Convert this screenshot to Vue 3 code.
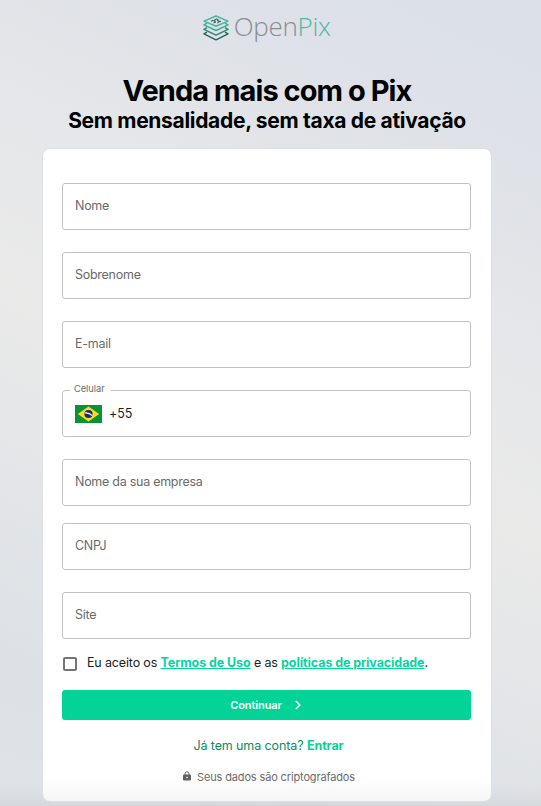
<script setup>
const fields = [
  { id: 'nome', label: 'Nome' },
  { id: 'sobrenome', label: 'Sobrenome' },
  { id: 'email', label: 'E-mail' },
  { id: 'celular', label: 'Celular', phone: true },
  { id: 'empresa', label: 'Nome da sua empresa', tight: true },
  { id: 'cnpj', label: 'CNPJ' },
  { id: 'site', label: 'Site' },
]
</script>

<template>
  <main class="page">
    <div class="logo">
      <svg class="mark" viewBox="0 0 26 26" fill="none" stroke-width="1.500" stroke-linejoin="round">
        <path d="M4 17.200 1 18.900l12 5.900 12-5.900-3-1.700" stroke="#22695a" />
        <path d="M4 12.700 1 14.400l12 5.700 12-5.700-3-1.700" stroke="#2b8570" />
        <path d="M4 8.200 1 9.900l12 5.600 12-5.600-3-1.700" stroke="#3fae97" />
        <path d="M13 1 25 6.100 13 11.300 1 6.100Z" stroke="#49b7a0" />
        <path d="M8 6.300l2.200-1M10.500 8l2-1-1.500-1.500 2.500-1.600 1.500 1M14.500 8.200l1-1.300 2.500-.7M14 5.800l2.300-.9" stroke="#315f55" stroke-width="1.100" />
      </svg>
      <span class="wordmark">Open<span class="pix">Pix</span></span>
    </div>
    <h1>Venda mais com o Pix</h1>
    <h2>Sem mensalidade, sem taxa de ativação</h2>

    <form class="card" @submit.prevent>
      <div v-for="f in fields" :key="f.id" class="field" :class="{ tight: f.tight, phone: f.phone }">
        <template v-if="f.phone">
          <span class="float-label">{{ f.label }}</span>
          <svg class="flag" viewBox="0 0 27 18">
            <path d="M0 0h27v18H0z" fill="#079438" />
            <path d="M13.500 1.600 24.200 9l-10.700 7.400L2.800 9z" fill="#ffd91c" />
            <circle cx="13.500" cy="9" r="4.100" fill="#142c7c" />
            <path d="M9.800 7.900q4.300-.5 7.500 2.700" stroke="#fff" stroke-width="1.100" fill="none" />
          </svg>
          <span class="code">+55</span>
        </template>
        <span v-else>{{ f.label }}</span>
      </div>

      <div class="terms">
        <span class="checkbox"></span>
        <span class="terms-text">Eu aceito os <a>Termos de Uso</a> e as <a>políticas de privacidade</a>.</span>
      </div>

      <button class="submit">
        <span>Continuar</span>
        <svg viewBox="0 0 8 10"><path d="M1.800 1l4 4-4 4" fill="none" stroke="#fff" stroke-width="1.600" /></svg>
      </button>

      <p class="login">Já tem uma conta? <b>Entrar</b></p>
      <p class="secure">
        <svg viewBox="0 0 8 10">
          <path d="M2 4V2.800a2 2 0 0 1 4 0V4" fill="none" stroke="#616161" stroke-width="1" />
          <rect y="3.500" width="8" height="6" rx="1" fill="#616161" />
          <circle cx="4" cy="6.500" r=".8" fill="#fff" />
        </svg>
        <span>Seus dados são criptografados</span>
      </p>
    </form>
  </main>
</template>

<style>
body {
  margin: 0;
}
</style>

<style scoped>
.page {
  box-sizing: border-box;
  height: 806px;
  padding: 13px 49px 0 42px;
  overflow: hidden;
  display: flex;
  flex-direction: column;
  align-items: center;
  font-family: Inter, "Liberation Sans", sans-serif;
  background:
    linear-gradient(to top, rgba(80, 80, 90, 0.07), transparent 22px),
    linear-gradient(205deg, #dbe0e9 0%, #dfe2e7 18%, #e4e6e9 30%, #eaeae9 50%, #e4e6e8 66%, #dde1e6 86%, #dfe2e7 100%);
}
.logo {
  display: flex;
  align-items: center;
  gap: 4.5px;
  height: 28px;
}
.mark {
  width: 26px;
  height: 26px;
  margin-top: 2px;
}
.wordmark {
  font-family: "Open Sans", sans-serif;
  font-weight: 300;
  font-size: 26px;
  line-height: 28px;
  letter-spacing: -0.3px;
  margin-top: -2px;
  color: #8b8d91;
}
.pix {
  color: #4ab9a4;
}
h1 {
  margin: 32px 0 0;
  font-size: 29px;
  line-height: 36px;
  font-weight: 700;
  letter-spacing: -0.95px;
  white-space: nowrap;
  color: #000;
}
h2 {
  margin: 0;
  font-size: 21px;
  line-height: 24px;
  font-weight: 700;
  letter-spacing: -0.31px;
  white-space: nowrap;
  color: #000;
}
.card {
  box-sizing: border-box;
  flex: none;
  width: 450px;
  height: 654px;
  margin-top: 15px;
  padding: 34px 20px 0 19px;
  border: 1px solid #dedfe1;
  border-radius: 8px;
  background: linear-gradient(to top, #f5f5f6, #fff 22px);
}
.field {
  position: relative;
  box-sizing: border-box;
  display: flex;
  align-items: center;
  height: 47px;
  margin-bottom: 22px;
  padding: 0 12px 2px;
  border: 1px solid #c2c2c2;
  border-radius: 3px;
  font-size: 12.5px;
  letter-spacing: -0.27px;
  color: #6a6a6a;
}
.tight {
  margin-bottom: 17px;
}
.phone {
  padding-bottom: 0;
}
.float-label {
  position: absolute;
  top: -8px;
  left: 7px;
  padding: 0 6px 0 4px;
  background: #fff;
  font-size: 9.3px;
  line-height: 12px;
  letter-spacing: -0.05px;
}
.flag {
  width: 27px;
  height: 18px;
  margin-right: 7px;
}
.code {
  letter-spacing: -0.1px;
  color: #222;
}
.terms {
  display: flex;
  align-items: center;
  height: 20px;
  margin-top: -8px;
  font-size: 12.5px;
  letter-spacing: -0.15px;
  white-space: nowrap;
  color: #222;
}
.terms-text {
  margin-top: -2px;
}
.checkbox {
  box-sizing: border-box;
  width: 14px;
  height: 14px;
  margin: 1px 10px 0 1px;
  border: 2px solid #747474;
  border-radius: 2px;
}
.terms a {
  font-weight: 700;
  letter-spacing: -0.09px;
  color: #03d69d;
  text-decoration: underline;
}
.submit {
  display: flex;
  align-items: center;
  justify-content: center;
  gap: 12px;
  width: 100%;
  height: 30px;
  margin-top: 17px;
  padding: 0 1px 0 0;
  border: 0;
  border-radius: 3px;
  background: #03d397;
  color: #fff;
  font-family: inherit;
  font-size: 11px;
  font-weight: 600;
  letter-spacing: -0.1px;
}
.submit span {
  margin-top: -1px;
}
.submit svg {
  width: 8px;
  height: 10px;
}
.login {
  margin: 17px 0 0;
  padding-left: 4px;
  text-align: center;
  font-size: 12.5px;
  line-height: 18px;
  letter-spacing: -0.1px;
  color: #0b8c65;
}
.login b {
  font-weight: 700;
  letter-spacing: -0.1px;
  color: #03d397;
}
.secure {
  display: flex;
  align-items: center;
  justify-content: center;
  gap: 6px;
  margin: 13px 0 0;
  padding-left: 5px;
  font-size: 11px;
  line-height: 18px;
  letter-spacing: -0.14px;
  color: #6a6a6a;
}
.secure svg {
  width: 8px;
  height: 10px;
  margin-top: -2px;
}
</style>
